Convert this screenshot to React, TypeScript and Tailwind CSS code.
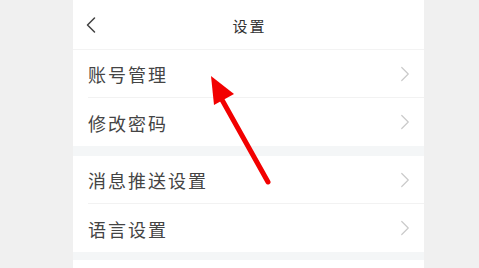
import { ChevronLeft, ChevronRight } from "lucide-react";

const font = { fontFamily: '"Noto Sans CJK SC", "Noto Sans", sans-serif' };

const Row = ({ label, last }: { label: string; last?: boolean }) => (
  <div className="h-[48px] pl-[15px] flex items-center">
    <div className={`flex-1 h-full flex items-center pr-[6px] ${last ? "" : "border-b border-[#f2f2f2]"}`}>
      <span className="flex-1 text-[18px] tracking-[2px] text-[#444] pt-[2px]">{label}</span>
      <ChevronRight size={26} strokeWidth={1.1} className="text-[#cacaca]" />
    </div>
  </div>
);

export default function App() {
  return (
    <div className="w-[479px] h-[268px] bg-[#f0f0f0] overflow-hidden" style={font}>
      <div className="relative ml-[73px] w-[351px] h-full bg-[#f4f6f7] flex flex-col">
        <div className="h-[50px] bg-white border-b border-[#f3f3f3] relative flex items-center justify-center">
          <ChevronLeft size={28} strokeWidth={1.3} className="absolute left-[4px] top-[11px] text-[#444]" />
          <span className="text-[15px] tracking-[2px] text-[#333] pl-[2px] pt-[3px]">设置</span>
        </div>
        <div className="bg-white">
          <Row label="账号管理" />
          <Row label="修改密码" last />
        </div>
        <div className="h-[10px]" />
        <div className="bg-white">
          <Row label="消息推送设置" />
          <Row label="语言设置" last />
        </div>
        <div className="h-[8px]" />
        <div className="bg-white flex-1" />
        <svg className="absolute left-0 top-0 pointer-events-none" width="351" height="268">
          <line x1="148" y1="98" x2="195" y2="182" stroke="#f20000" strokeWidth="5" strokeLinecap="round" />
          <polygon points="138,76 141,105 161,94" fill="#f20000" />
        </svg>
      </div>
    </div>
  );
}
